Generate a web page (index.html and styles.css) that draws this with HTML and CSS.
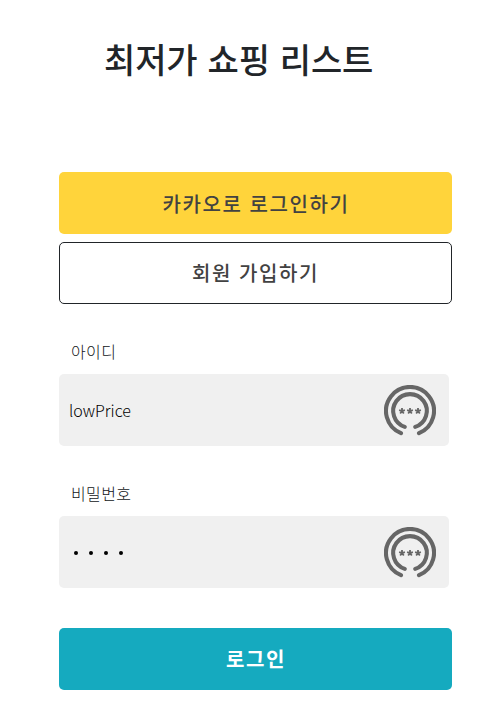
FILE: index.html
```
<!DOCTYPE html>
<html lang="ko">
<head>
<meta charset="utf-8">
<title>최저가 쇼핑 리스트</title>
<link rel="stylesheet" href="styles.css">
</head>
<body>
<svg class="defs" aria-hidden="true">
  <symbol id="keypad" viewBox="-26 -26 52 52">
    <g fill="none" stroke="#666" stroke-width="4.1" stroke-linecap="round">
      <path d="M-9 22.2A24 24 0 1 1 9 22.2"/>
      <path d="M-5.2 15.9A16.8 16.8 0 1 1 5.2 15.9"/>
    </g>
    <g stroke="#666" stroke-width="1.8">
      <path id="star" d="M-8 0V-3.1M-8 0L-10.9-.9M-8 0L-9.8 2.5M-8 0L-6.2 2.5M-8 0L-5.1-.9"/>
      <use href="#star" x="8"/>
      <use href="#star" x="16"/>
    </g>
  </symbol>
</svg>
<main class="page">
  <h1 class="title">최저가 쇼핑 리스트</h1>
  <div class="actions">
    <button class="btn kakao">카카오로 로그인하기</button>
    <button class="btn signup">회원 가입하기</button>
  </div>
  <form class="form">
    <label class="label" for="uid">아이디</label>
    <div class="field">
      <input class="input" id="uid" type="text" value="lowPrice">
      <svg class="icon"><use href="#keypad"/></svg>
    </div>
    <label class="label" for="pwd">비밀번호</label>
    <div class="field">
      <span class="dots" id="pwd"><i></i><i></i><i></i><i></i></span>
      <svg class="icon"><use href="#keypad"/></svg>
    </div>
    <button class="btn login" type="button">로그인</button>
  </form>
</main>
</body>
</html>
```
FILE: styles.css
```
* { box-sizing: border-box; }
body {
  margin: 0;
  background: #fff;
  color: #212529;
  font-family: "Noto Sans CJK KR", sans-serif;
}
.defs { display: block; width: 0; height: 0; }
.page { width: 393px; margin-left: 59px; padding-top: 35px; }
.title {
  margin: 0 0 0 45px;
  height: 48px;
  line-height: 48px;
  font-size: 34px;
  font-weight: 500;
  letter-spacing: -.1px;
  word-spacing: .5px;
  white-space: nowrap;
}
.actions { display: flex; flex-direction: column; gap: 8px; margin-top: 89px; }
.btn {
  display: block;
  width: 393px;
  height: 62px;
  padding: 0 0 0 1px;
  border: 0;
  border-radius: 5px;
  font: 500 20px/60px "Noto Sans CJK KR", sans-serif;
  letter-spacing: 1.6px;
  color: #424242;
}
.kakao { padding-top: 1px; background: #ffd43b; }
.signup { padding-left: 0; background: #fff; border: 1px solid #212529; }
.form { padding-top: 35px; }
.label {
  display: block;
  height: 24px;
  margin: 0 0 11px 12px;
  color: #111518;
  font-size: 16px;
  line-height: 24px;
  font-weight: 300;
  letter-spacing: .4px;
}
.field {
  display: flex;
  align-items: center;
  justify-content: space-between;
  width: 390px;
  height: 72px;
  margin-bottom: 35px;
  padding: 1px 13px 0 10px;
  border-radius: 5px;
  background: #f0f0f0;
}
.input {
  width: 200px;
  height: 40px;
  padding: 0 0 2px;
  border: 0;
  outline: 0;
  background: none;
  color: #000;
  font: 300 16px "Noto Sans CJK KR", sans-serif;
}
.icon { width: 52px; height: 52px; }
.dots { display: flex; gap: 11px; padding: 1px 0 0 5px; }
.dots i { width: 4px; height: 4px; border-radius: 50%; background: #000; }
.login { margin-top: 40px; background: #15aabf; color: #fff; font-weight: 600; }
```
